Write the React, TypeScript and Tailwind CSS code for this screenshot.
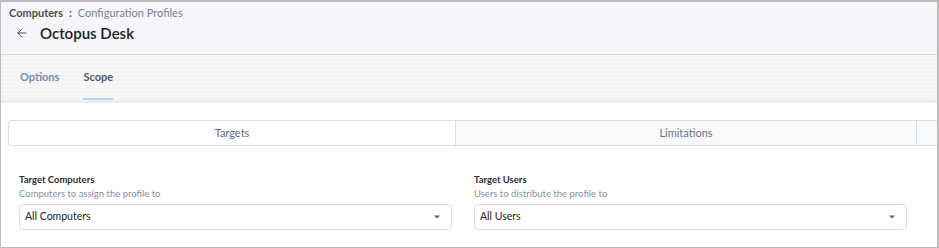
import { ArrowLeft } from "lucide-react";

function Caret() {
  return (
    <svg width="6" height="4" viewBox="0 0 6 4" className="shrink-0">
      <path d="M0 0.5h6L3 3.5z" fill="#5a6472" />
    </svg>
  );
}

function Field({ title, hint, value }: { title: string; hint: string; value: string }) {
  return (
    <div className="flex flex-col">
      <div className="text-[9.5px] font-bold leading-[12px] text-[#2b2e33]">{title}</div>
      <div className="mt-[2px] text-[9.5px] leading-[12px] text-[#8a9099]">{hint}</div>
      <div className="mt-[4px] flex h-[26px] items-center justify-between rounded-[4px] border border-[#dcdfe4] bg-white pl-[5px] pr-[11px]">
        <span className="text-[10.5px] text-[#1f2226]">{value}</span>
        <Caret />
      </div>
    </div>
  );
}

export default function App() {
  return (
    <main
      className="h-[248px] w-[939px] overflow-hidden border-t-2 border-r-2 border-b border-l border-[#bcbcbc] bg-white"
      style={{ fontFamily: "Lato, 'Open Sans', sans-serif" }}
    >
      <section className="h-[53px] border-b border-[#d3d9e0] bg-[#f4f6f9] px-[8px] pt-[4px]">
        <div className="flex items-center gap-[5px] text-[11px] leading-[14px]">
          <span className="font-bold text-[#4a4f56]">Computers</span>
          <span className="ml-[1px] font-bold text-[#4a4f56]">:</span>
          <span className="ml-[1px] text-[#7d838b]">Configuration Profiles</span>
        </div>
        <div className="mt-[3px] flex items-center">
          <ArrowLeft className="ml-[6px] h-[14px] w-[14px] text-[#3a3d42]" strokeWidth={1.5} />
          <h1 className="ml-[11px] text-[15px] font-semibold leading-[20px] text-[#1d2024]">Octopus Desk</h1>
        </div>
      </section>

      <nav
        className="flex h-[48px] items-stretch gap-[24px] border-b-[3px] border-[#eceef1] bg-[#f6f7f8] px-[19px]"
        style={{
          backgroundImage:
            "radial-gradient(circle at 1px 1px, rgba(0,0,0,0.018) 1px, transparent 1.2px)",
          backgroundSize: "4px 4px",
        }}
      >
        <div className="flex items-center text-[11px] font-bold text-[#7b8ba6]">Options</div>
        <div className="flex items-center border-b-2 border-[#b8d0e8] pt-[2px] text-[11px] font-bold text-[#4b586b]">
          Scope
        </div>
      </nav>

      <section className="pl-[7px] pt-[17px]">
        <div className="flex h-[26px] rounded-l-[4px] border border-r-0 border-[#dcdfe4]">
          <div className="flex w-[446px] items-center justify-center rounded-l-[4px] bg-white text-[11px] text-[#5b6b82]">
            Targets
          </div>
          <div className="flex w-[461px] items-center justify-center border-l border-[#dcdfe4] bg-[#f8f9fb] text-[11px] text-[#6e7580]">
            Limitations
          </div>
          <div className="flex-1 border-l border-[#dcdfe4] bg-[#f8f9fb]" />
        </div>
      </section>

      <section className="grid grid-cols-[433px_433px] gap-[22px] pl-[18px] pt-[28px]">
        <Field title="Target Computers" hint="Computers to assign the profile to" value="All Computers" />
        <Field title="Target Users" hint="Users to distribute the profile to" value="All Users" />
      </section>
    </main>
  );
}
